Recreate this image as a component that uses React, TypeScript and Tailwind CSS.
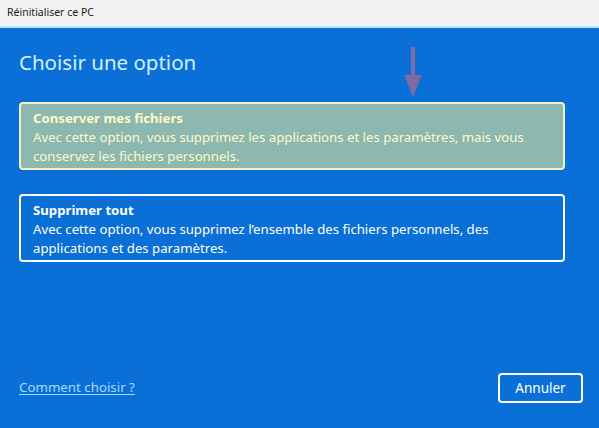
export default function App() {
  return (
    <div
      className="w-[599px] h-[428px] flex flex-col bg-[#0a6fd6] overflow-hidden"
      style={{ fontFamily: '"Noto Sans", "Open Sans", sans-serif' }}
    >
      {/* title bar */}
      <div className="h-[28px] shrink-0 bg-[#f2f2f2] border-b-2 border-[#b6e4f6] flex items-center px-[7px] text-[10.5px] text-[#1a1a1a]">
        Réinitialiser ce PC
      </div>

      <div className="flex-1 flex flex-col px-[19px] pt-[19px] pb-[25px] relative">
        <h1 className="text-[20.5px] leading-[30px] text-[#d3f0ff] font-normal">Choisir une option</h1>

        {/* arrow pointing at the first card */}
        <svg className="absolute left-[403px] top-[19px]" width="20" height="52" viewBox="0 0 20 52">
          <rect x="8" y="0" width="4" height="30" fill="#7f6b9f" />
          <polygon points="1,28 19,28 10,50" fill="#7f6b9f" />
        </svg>

        <div className="mt-[25px] w-[546px] h-[68px] rounded-[4px] border-2 border-[#f6efbf] bg-[#8cb8b0] px-[12px] pt-[5px] text-[#fff8c8] text-[13.2px] leading-[19px]">
          <div className="font-bold">Conserver mes fichiers</div>
          <div>
            Avec cette option, vous supprimez les applications et les paramètres, mais vous conservez les fichiers
            personnels.
          </div>
        </div>

        <div className="mt-[24px] w-[546px] h-[68px] rounded-[4px] border-2 border-white px-[12px] pt-[5px] text-white text-[13.2px] leading-[19px]">
          <div className="font-bold">Supprimer tout</div>
          <div>
            Avec cette option, vous supprimez l’ensemble des fichiers personnels, des applications et des paramètres.
          </div>
        </div>

        <div className="flex-1" />

        <div className="flex items-center justify-between">
          <a className="text-[13.3px] text-[#a9dbff] underline underline-offset-2">Comment choisir ?</a>
          <button className="w-[85px] h-[30px] mr-[-3px] rounded-[4px] border-2 border-white text-white text-[13.5px]">
            Annuler
          </button>
        </div>
      </div>
    </div>
  );
}
